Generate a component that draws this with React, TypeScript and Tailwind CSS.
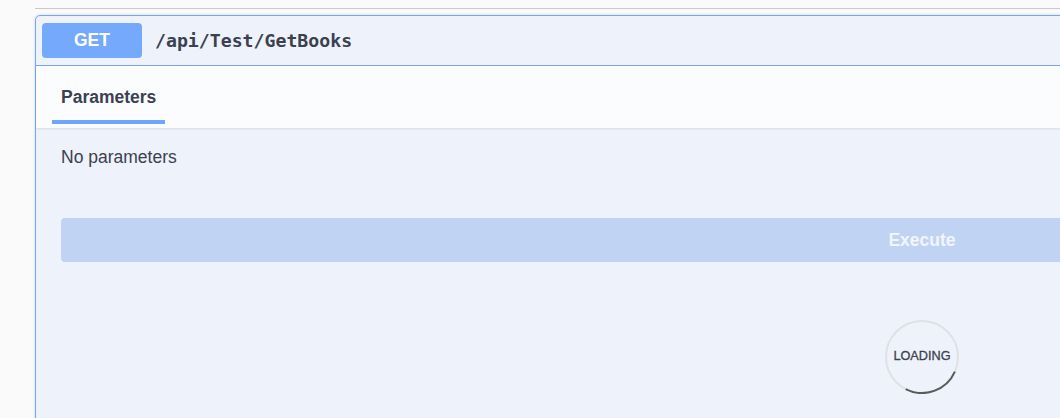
const Spinner = () => (
  <div className="relative flex h-[74px] w-[74px] items-center justify-center">
    <svg className="absolute inset-0" width="74" height="74" viewBox="0 0 74 74">
      <circle cx="37" cy="37" r="36" fill="none" stroke="#dfe1e6" strokeWidth="2" />
      <path d="M69.9 51.6 A36 36 0 0 1 20.7 69.1" fill="none" stroke="#5a5a5a" strokeWidth="2" />
    </svg>
    <span className="relative text-[12.7px] font-normal text-[#3b4151] [-webkit-text-stroke:0.3px_#3b4151]">LOADING</span>
  </div>
);

export default function App() {
  return (
    <div className="h-[418px] w-full overflow-hidden bg-[#fafafa] pl-[35px] pt-[8px] font-['Liberation_Sans',Arial,sans-serif]">
      <div className="w-[1774px] border-t border-[#c8c8c8]" />

      <div className="mt-[6px] w-[1774px] rounded-[5px] border border-[#72a8fc] bg-[#eef2fa] shadow-[0_0_3px_rgba(0,0,0,0.15)]">
        {/* summary */}
        <div className="flex items-center gap-[13px] border-b border-[#72a8fc] px-[6px] py-[7px]">
          <span className="flex h-[35px] w-[100px] items-center justify-center rounded-[4px] bg-[#74a9fc] text-[17.5px] font-bold text-white">
            GET
          </span>
          <span className="font-['DejaVu_Sans_Mono',monospace] text-[18.2px] font-bold text-[#3b4151]">
            /api/Test/GetBooks
          </span>
        </div>

        {/* tabs */}
        <div className="flex h-[62px] bg-[#fbfcfe] px-[16px] shadow-[0_1px_2px_rgba(0,0,0,0.1)]">
          <div className="flex flex-col pt-[21px]">
            <span className="px-[9px] text-[17.5px] font-bold leading-[20px] text-[#3b4151]">Parameters</span>
            <span className="mt-[13px] h-[4px] w-[113px] bg-[#6ea6fb]" />
          </div>
        </div>

        {/* body */}
        <div className="flex flex-col px-[25px] pt-[19px] pb-[30px]">
          <p className="text-[17.5px] leading-[20px] text-[#3b4151]">No parameters</p>
          <button className="mt-[51px] h-[44px] w-full rounded-[4px] bg-[#c0d3f2] text-[17.5px] font-bold text-[#f1f5fd]">
            Execute
          </button>
          <div className="mt-[58px] flex justify-center">
            <Spinner />
          </div>
        </div>
      </div>
    </div>
  );
}
